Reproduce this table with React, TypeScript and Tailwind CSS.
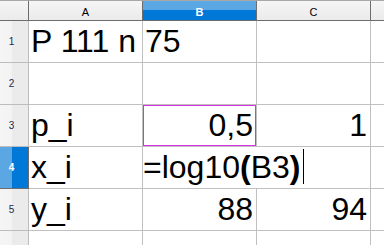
const font = { fontFamily: '"Liberation Sans", Arial, sans-serif' };

const cols = ["A", "B", "C"];

type Cell = { text?: string; align?: "left" | "right"; marked?: boolean };

const rows: Cell[][] = [
  [{ text: "P 111 n 75" }, {}, {}],
  [{}, {}, {}],
  [{ text: "p_i" }, { text: "0,5", align: "right", marked: true }, { text: "1", align: "right" }],
  [{ text: "x_i" }, {}, {}],
  [{ text: "y_i" }, { text: "88", align: "right" }, { text: "94", align: "right" }],
];

function ColHeader({ label, active }: { label: string; active?: boolean }) {
  if (active) {
    return (
      <div className="relative h-[20px] border-r border-b border-[#6d6d6d] bg-[linear-gradient(#5aa7e4_0,#5aa7e4_9px,#0078d7_9px)] text-center text-[11px] leading-[22px] font-bold text-white">
        {label}
      </div>
    );
  }
  return (
    <div className="h-[20px] border-r border-b border-[#6d6d6d] bg-[linear-gradient(#f5f5f5,#ebebeb)] text-center text-[11px] leading-[22px] text-black">
      {label}
    </div>
  );
}

function RowHeader({ n, active }: { n: number; active?: boolean }) {
  return (
    <div
      className={
        active
          ? "flex h-[42px] items-center justify-center border-r border-b border-[#6d6d6d] bg-[linear-gradient(90deg,#5aa7e4_0,#5aa7e4_12px,#0078d7_12px)] pr-[5px] text-[10px] font-bold text-white"
          : "flex h-[42px] items-center justify-center border-r border-b border-[#bcbcbc] bg-[linear-gradient(90deg,#f5f5f5_0,#f3f3f3_12px,#ebebeb_12px)] pr-[5px] text-[10px] text-[#2c1f4a]"
      }
    >
      {n}
    </div>
  );
}

export default function App() {
  return (
    <div className="h-[245px] w-[384px] overflow-hidden bg-white" style={font}>
      <div className="grid grid-cols-[29px_114px_114px_114px_1fr] border-t border-[#a8a8a8]">
        {/* corner + column headers */}
        <div className="h-[20px] border-r border-b border-[#6d6d6d] bg-[linear-gradient(#f5f5f5,#ebebeb)]" />
        {cols.map((c) => (
          <ColHeader key={c} label={c} active={c === "B"} />
        ))}
        <div className="h-[20px] border-b border-[#6d6d6d] bg-[linear-gradient(#f5f5f5,#ebebeb)]" />

        {rows.map((row, r) => {
          const rowNo = r + 1;
          if (rowNo === 4) {
            return [
              <RowHeader key="h4" n={4} active />,
              <div
                key="a4"
                className="h-[42px] border-r border-b border-[#c0c0c0] px-[2px] text-[32px] leading-[41px] text-black whitespace-nowrap"
              >
                {row[0].text}
              </div>,
              // cell being edited, text runs over into C
              <div
                key="b4"
                className="col-span-2 flex h-[42px] items-start border-r border-b border-[#c0c0c0] text-[32px] leading-[41px] text-black whitespace-nowrap"
              >
                <span>
                  =log10<b>(</b>B3<b>)</b>
                </span>
                <span className="mt-[2px] ml-[3px] h-[35px] w-px bg-black" />
              </div>,
              <div key="d4" className="h-[42px] border-b border-[#c0c0c0]" />,
            ];
          }
          return [
            <RowHeader key={`h${rowNo}`} n={rowNo} />,
            ...row.map((cell, c) => (
              <div
                key={`${rowNo}-${c}`}
                className={
                  cell.align === "right"
                    ? "relative h-[42px] border-r border-b border-[#c0c0c0] pr-[3px] text-right text-[32px] leading-[41px] text-black whitespace-nowrap"
                    : "relative h-[42px] border-r border-b border-[#c0c0c0] pl-[2px] text-left text-[32px] leading-[41px] text-black whitespace-nowrap"
                }
              >
                {cell.text}
                {/* reference highlight from the formula being typed */}
                {cell.marked && (
                  <div className="pointer-events-none absolute top-0 left-0 h-[41px] w-[113px] border border-[#dc2fe6]" />
                )}
              </div>
            )),
            <div key={`d${rowNo}`} className="h-[42px] border-b border-[#c0c0c0]" />,
          ];
        })}

        {/* partial row 6 */}
        <div className="h-[20px] border-r border-[#bcbcbc] bg-[linear-gradient(90deg,#f5f5f5_0,#f3f3f3_12px,#ebebeb_12px)]" />
        <div className="h-[20px] border-r border-[#c0c0c0]" />
        <div className="h-[20px] border-r border-[#c0c0c0]" />
        <div className="h-[20px] border-r border-[#c0c0c0]" />
        <div className="h-[20px]" />
      </div>
    </div>
  );
}
